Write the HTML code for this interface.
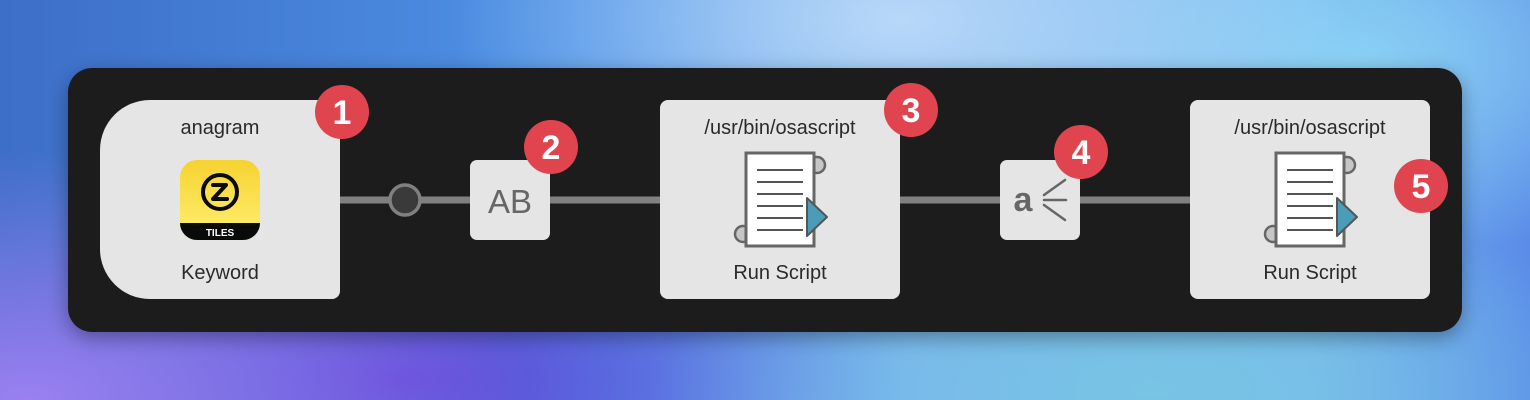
<!DOCTYPE html>
<html><head><meta charset="utf-8"><style>
html,body{margin:0;padding:0;width:1530px;height:400px;overflow:hidden}
body{background:
radial-gradient(ellipse 500px 250px at 30px 400px,#9a80f0 0%,rgba(154,128,240,0) 100%),
radial-gradient(ellipse 500px 200px at 1150px 390px,#78c4e4 0%,rgba(120,196,228,0) 100%),
radial-gradient(ellipse 450px 220px at 900px 20px,#b8d8f8 0%,rgba(184,216,248,0) 100%),
radial-gradient(ellipse 400px 200px at 1350px 60px,#8ad0f4 0%,rgba(138,208,244,0) 100%),
radial-gradient(ellipse 500px 200px at 400px 380px,#6248d8 0%,rgba(98,72,216,0) 100%),
linear-gradient(90deg,#3d6ec8 0%,#4f94e8 40%,#7ab0f0 60%,#78b8f0 85%,#5a8ce8 100%);}
svg{position:absolute;left:0;top:0}
text{font-family:"Liberation Sans",sans-serif}
</style></head><body>
<svg width="1530" height="400" viewBox="0 0 1530 400">
<defs><filter id="sh" x="-10%" y="-30%" width="120%" height="160%"><feDropShadow dx="0" dy="6" stdDeviation="10" flood-color="#000" flood-opacity="0.35"/></filter></defs>
<rect x="68" y="68" width="1394" height="264" rx="24" fill="#1e1e1e" filter="url(#sh)"/>
<line x1="340" y1="200" x2="1190" y2="200" stroke="#808080" stroke-width="7"/>
<circle cx="405" cy="200" r="15" fill="#3a3a3a" stroke="#808080" stroke-width="3.5"/>
<path d="M150 100 H332 a8 8 0 0 1 8 8 V291 a8 8 0 0 1 -8 8 H150 a50 50 0 0 1 -50 -50 V150 a50 50 0 0 1 50 -50 Z" fill="#e5e5e5"/>
<text x="220" y="134" font-size="20" fill="#2a2a2a" text-anchor="middle">anagram</text>
<text x="220" y="279" font-size="20" fill="#2a2a2a" text-anchor="middle">Keyword</text>
<defs><linearGradient id="yg" x1="0" y1="0" x2="0" y2="1"><stop offset="0" stop-color="#f6d230"/><stop offset="1" stop-color="#fff072"/></linearGradient>
<clipPath id="ic"><rect x="180" y="160" width="80" height="80" rx="17"/></clipPath></defs>
<g clip-path="url(#ic)"><rect x="180" y="160" width="80" height="80" fill="url(#yg)"/><rect x="180" y="223" width="80" height="17" fill="#0a0a0a"/></g>
<circle cx="220" cy="192" r="17" fill="none" stroke="#0a0a0a" stroke-width="4"/>
<path d="M213 185 H226 L213 199 H227" fill="none" stroke="#0a0a0a" stroke-width="4" stroke-linejoin="round" stroke-linecap="round"/>
<text x="220" y="236" font-size="10" font-weight="bold" fill="#fff" text-anchor="middle">TILES</text>
<rect x="470" y="160" width="80" height="80" rx="7" fill="#e5e5e5"/>
<text x="510" y="213" font-size="33" fill="#666" text-anchor="middle">AB</text>
<rect x="660" y="100" width="240" height="199" rx="8" fill="#e5e5e5"/>
<text x="780" y="134" font-size="20" fill="#2a2a2a" text-anchor="middle">/usr/bin/osascript</text>
<text x="780" y="279" font-size="20" fill="#2a2a2a" text-anchor="middle">Run Script</text>
<g id="scr">
<circle cx="817" cy="165" r="8" fill="#c6c6c6" stroke="#666" stroke-width="2.5"/>
<circle cx="743" cy="234" r="8" fill="#c6c6c6" stroke="#666" stroke-width="2.5"/>
<rect x="746" y="153" width="68" height="93" fill="#fff" stroke="#666" stroke-width="3"/>
<g stroke="#555" stroke-width="2"><line x1="757" y1="170" x2="803" y2="170"/><line x1="757" y1="182" x2="803" y2="182"/><line x1="757" y1="194" x2="803" y2="194"/><line x1="757" y1="206" x2="803" y2="206"/><line x1="757" y1="218" x2="803" y2="218"/><line x1="757" y1="230" x2="803" y2="230"/></g>
<path d="M807 198 L827 217 L807 236 Z" fill="#4b9cb9" stroke="#555" stroke-width="2" stroke-linejoin="round"/>
</g>
<rect x="1000" y="160" width="80" height="80" rx="7" fill="#e5e5e5"/>
<text x="1023" y="211" font-size="34" font-weight="bold" fill="#666" text-anchor="middle">a</text>
<g stroke="#666" stroke-width="2.5" stroke-linecap="round"><line x1="1044" y1="195" x2="1065" y2="180"/><line x1="1044" y1="200" x2="1066" y2="200"/><line x1="1044" y1="205" x2="1065" y2="220"/></g>
<rect x="1190" y="100" width="240" height="199" rx="8" fill="#e5e5e5"/>
<text x="1310" y="134" font-size="20" fill="#2a2a2a" text-anchor="middle">/usr/bin/osascript</text>
<text x="1310" y="279" font-size="20" fill="#2a2a2a" text-anchor="middle">Run Script</text>
<use href="#scr" x="530" y="0"/>
<g fill="#e0454f"><circle cx="342" cy="112" r="27"/><circle cx="551" cy="147" r="27"/><circle cx="911" cy="110" r="27"/><circle cx="1081" cy="152" r="27"/><circle cx="1421" cy="186" r="27"/></g>
<g fill="#fff" font-size="34" font-weight="bold" text-anchor="middle">
<text x="342" y="124">1</text><text x="551" y="159">2</text><text x="911" y="122">3</text><text x="1081" y="164">4</text><text x="1421" y="198">5</text></g>
</svg>
</body></html>
